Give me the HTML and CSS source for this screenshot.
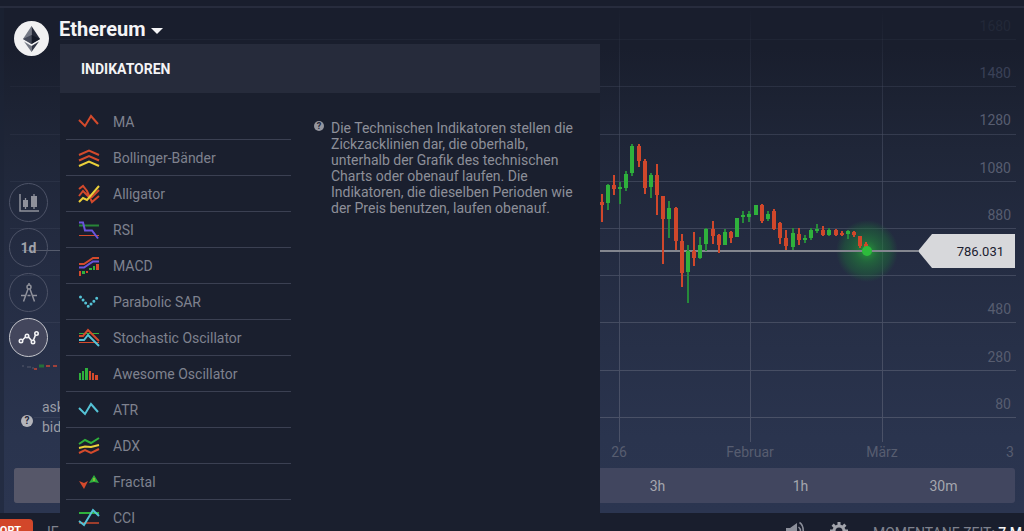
FILE: index.html
```html
<!DOCTYPE html>
<html lang="de">
<head>
<meta charset="utf-8">
<title>Ethereum – Indikatoren</title>
<link rel="stylesheet" href="styles.css">
</head>
<body>
<div class="topbar"></div>
<main class="stage">
  <svg class="chart" viewBox="0 8 1024 505" preserveAspectRatio="xMaxYMin slice" role="img" aria-label="Kursdiagramm Ethereum">
    <defs>
      <linearGradient id="fade" gradientUnits="userSpaceOnUse" x1="0" y1="8" x2="0" y2="442">
        <stop offset="0" stop-color="#454c60" stop-opacity="0"/>
        <stop offset=".35" stop-color="#454c60" stop-opacity=".7"/>
        <stop offset="1" stop-color="#4b5268"/>
      </linearGradient>
      <radialGradient id="glow">
        <stop offset="0" stop-color="#28a03a" stop-opacity=".95"/>
        <stop offset=".35" stop-color="#22813a" stop-opacity=".65"/>
        <stop offset=".75" stop-color="#1e6a3a" stop-opacity=".45"/>
        <stop offset="1" stop-color="#1e6a3a" stop-opacity="0"/>
      </radialGradient>
    </defs>
    <path class="rim" d="M0 8h4v505h-4z"/>
    <g fill="url(#fade)">
      <path d="M60 39h956v1H60zM60 86h956v1H60zM60 134h956v1H60zM60 181h956v1H60zM60 228h956v1H60zM60 275h956v1H60zM60 322h956v1H60zM60 370h956v1H60zM60 417h956v1H60z"/>
      <path opacity=".35" d="M10 86h50v1H10zM10 134h50v1H10zM10 181h50v1H10zM10 228h50v1H10zM10 275h50v1H10zM10 322h50v1H10zM34 417h26v1H34z"/>
      <path d="M619 8h1v434h-1zM750 8h1v434h-1zM882 8h1v434h-1z"/>
    </g>
    <g class="axis price-axis">
      <text class="faintest" x="1011" y="31">1680</text>
      <text class="faint" x="1011" y="78">1480</text>
      <text x="1011" y="125">1280</text>
      <text x="1011" y="173">1080</text>
      <text x="1011" y="220">880</text>
      <text x="1011" y="314">480</text>
      <text x="1011" y="362">280</text>
      <text x="1011" y="409">80</text>
    </g>
    <g class="axis time-axis">
      <text x="619" y="457">26</text>
      <text x="750" y="457">Februar</text>
      <text x="882" y="457">März</text>
      <text x="1010" y="457">3</text>
    </g>
    <circle cx="867" cy="251" r="31" fill="url(#glow)"/>
    <path class="price-line" d="M600 250h318v2H600z"/>
    <path class="price-line soft" d="M22 250h38v1H22z"/>
    <g class="up">
      <path class="wick" d="M608 184V210M620 182V204M626 171V191M632 144V176M651 173V198M669 201V238M688 245V303M700 237V259M706 228V251M725 229V245M743 211V223M749 211V222M768 211V221M793 228V250M805 235V243M811 228V240M817 224V233M829 228V236M848 230V239"/>
      <path class="bar" d="M608 185V203M620 187V189M626 174V188M632 146V173M651 175V187M669 208V219M688 251V272M700 245V258M706 229V244M725 232V245M737 218V237M743 215V217M749 214V217M756 205V215M768 214V219M793 233V247M805 238V240M811 230V238M817 229V231M829 230V235M848 231V234"/>
    </g>
    <g class="down">
      <path class="wick" d="M602 194V222M614 175V195M639 144V167M645 159V194M657 164V215M663 196V264M676 207V250M682 234V287M694 232V266M713 221V244M719 234V253M731 231V243M762 204V223M774 209V230M780 222V244M786 230V250M799 228V245M823 226V236M836 229V236M842 231V236M854 231V237M860 236V248M866 242V249"/>
      <path class="bar" d="M602 202V205M614 185V189M639 146V161M645 161V188M657 175V195M663 196V219M676 208V241M682 241V273M694 251V258M713 229V236M719 235V245M731 232V238M762 205V221M774 211V229M780 223V238M786 238V246M799 234V240M823 230V235M836 230V235M842 233V235M854 232V235M860 236V246M866 244V247"/>
    </g>
    <circle class="now" cx="867" cy="251" r="5"/>
    <path class="tag" d="M918 251l14-17h83v34h-83z"/>
    <text class="tag-text" x="1004" y="256">786.031</text>
    <path class="mini-grey" d="M22 366h2m3 1h4m1 1h2"/>
    <path class="mini-down" d="M34 369h3m9-3h4m3 0h4"/>
    <path class="mini-up" d="M39 366h5"/>
  </svg>

  <div class="upper">
    <aside class="rail">
      <svg class="coin" viewBox="0 0 35 35" aria-hidden="true">
        <circle cx="17.500" cy="17.500" r="17.500" fill="#f1f1f2"/>
        <path d="M17.500 5L9 18l8.500 5z" fill="#747985"/>
        <path d="M17.500 5L26 18l-8.500 5z" fill="#242938"/>
        <path d="M9 18l8.500-4v9z" fill="#454a59"/>
        <path d="M26 18l-8.500-4v9z" fill="#151a28"/>
        <path d="M10 20.500l7.500 4.500v6z" fill="#747985"/>
        <path d="M25 20.500L17.500 25v6z" fill="#303544"/>
      </svg>
      <nav class="tools" aria-label="Werkzeuge">
        <button class="tool" type="button" aria-label="Diagrammtyp">
          <svg class="glyph" viewBox="0 0 22 22"><path d="M2 2v17h19" fill="none" stroke="#8f919b" stroke-width="1.500"/><path d="M5 8h5v7H5zM13 4h6v11h-6z" fill="#8f919b"/><path d="M7.500 6v11M16 2v15" stroke="#8f919b" stroke-width="1.300"/></svg>
        </button>
        <button class="tool" type="button">1d</button>
        <button class="tool" type="button" aria-label="Zeichenwerkzeuge">
          <svg class="glyph" viewBox="0 0 22 22"><g fill="none" stroke="#8f919b" stroke-width="1.500"><circle cx="11" cy="5" r="2"/><path d="M11 1v2M10 7L5.500 19.500M12 7l4.500 12.500M3 13.500h4.500m2 0h3m2 0H19"/></g></svg>
        </button>
        <button class="tool active" type="button" aria-label="Indikatoren" aria-pressed="true">
          <svg class="glyph" viewBox="0 0 22 22"><g fill="none" stroke="#f3f3f5" stroke-width="1.600"><path d="M4.500 13l3-3M10 9.500l3.500 4M15.500 13l2-5"/><circle cx="3" cy="14" r="1.700"/><circle cx="9" cy="9" r="1.700"/><circle cx="15" cy="15" r="1.700"/><circle cx="18.500" cy="6.500" r="1.700"/></g></svg>
        </button>
      </nav>
      <div class="quote">
        <span class="help">?</span>
        <div class="quote-lines"><span>ask:</span><span>bid:</span></div>
      </div>
    </aside>
    <button class="asset" type="button">Ethereum<span class="caret"></span></button>
  </div>

  <div class="frames">
    <button class="frame current" type="button" aria-label="Zeitraum"></button>
    <button class="frame shift3" type="button">3h</button>
    <button class="frame" type="button">1h</button>
    <button class="frame" type="button">30m</button>
  </div>

  <section class="panel">
    <h2 class="panel-title">INDIKATOREN</h2>
    <div class="panel-body">
      <ul class="list">
        <li><button class="item" type="button"><svg class="mark" viewBox="0 0 20 18"><path class="r" d="M0 7l6 6 6-10 7 8"/></svg>MA</button></li>
        <li><button class="item" type="button"><svg class="mark" viewBox="0 0 20 18"><path class="r" d="M0 6l10-4.500L20 6M0 11.500L10 7l10 4.500"/><path class="y" d="M0 17l10-4.500L20 17"/></svg>Bollinger-Bänder</button></li>
        <li><button class="item" type="button"><svg class="mark" viewBox="0 0 20 18"><path class="r" d="M0 4l4-3 4 5 5 11 7-6M0 11l4-5 5 5 4 1 7-7"/><path class="y" d="M0 17l4-4 4 2L20 1"/></svg>Alligator</button></li>
        <li><button class="item" type="button"><svg class="mark" viewBox="0 0 20 18"><path class="g dim" d="M0 4.500h20"/><path class="r thin" d="M0 14.500h20"/><path class="v" d="M0 1.500h4l2 8h7l6 8"/></svg>RSI</button></li>
        <li><button class="item" type="button"><svg class="mark" viewBox="0 0 20 18"><path class="r" d="M0 7h5l9-6h6"/><path class="v" d="M0 10.500h5l9-6h6"/><path d="M0 14h2v5H0zM7 14h2v2H7zM17 7h3v6h-3z" fill="#d44a2c"/><path d="M3 14h3v3H3zM10 11h3v2h-3zM14 9h2v4h-2z" fill="#2fb13c"/></svg>MACD</button></li>
        <li><button class="item" type="button"><svg class="mark" viewBox="0 0 20 18"><path class="c dots" d="M1.500 4l8 9.500L19 4"/></svg>Parabolic SAR</button></li>
        <li><button class="item" type="button"><svg class="mark" viewBox="0 0 20 18"><path class="g thin" d="M0 4.500h20"/><path class="r thin" d="M0 13.500h20"/><path class="r" d="M0 7h4l5-6 11 11"/><path class="c" d="M0 11h5l4-5 11 11"/></svg>Stochastic Oscillator</button></li>
        <li><button class="item" type="button"><svg class="mark" viewBox="0 0 20 18"><path d="M0 8h2v7H0zM3 6h2v9H3zM6 3h3v12H6z" fill="#2fb13c"/><path d="M10 6h2v9h-2zM13 8h2v7h-2zM16 10h3v5h-3z" fill="#d44a2c"/></svg>Awesome Oscillator</button></li>
        <li><button class="item" type="button"><svg class="mark" viewBox="0 0 20 18"><path class="c" d="M0 7l6 6 6-10 7 8"/></svg>ATR</button></li>
        <li><button class="item" type="button"><svg class="mark" viewBox="0 0 20 18"><path class="g" d="M0 7l6-4 6 3 8-5"/><path class="y" d="M0 11l6-1.500 6 .5 8-2"/><path class="r" d="M0 16l6-3 6 3 8-4"/></svg>ADX</button></li>
        <li><button class="item" type="button"><svg class="mark" viewBox="0 0 20 18"><path d="M0 8l5 2 4-2-4 8z" fill="#d44a2c"/><path d="M10 10l5-8 5 8-5-1z" fill="#2fb13c"/><path d="M15 5v3" stroke="#d8c83a"/></svg>Fractal</button></li>
        <li><button class="item" type="button"><svg class="mark" viewBox="0 0 20 18"><path class="g" d="M0 4h20"/><path class="r dim" d="M0 14h20"/><path class="c" d="M0 12l5 4L14 1l6 6"/></svg>CCI</button></li>
      </ul>
      <div class="note">
        <span class="help small">?</span>
        <p class="note-text">Die Technischen Indikatoren stellen die Zickzacklinien dar, die oberhalb, unterhalb der Grafik des technischen Charts oder obenauf laufen. Die Indikatoren, die dieselben Perioden wie der Preis benutzen, laufen obenauf.</p>
      </div>
    </div>
  </section>
</main>
<footer class="footer">
  <button class="support" type="button">SUPPORT</button>
  <span class="brand">IE</span>
  <div class="status">
    <svg class="status-icon" viewBox="0 0 20 20" aria-hidden="true"><path d="M1 7h4l7-5v16l-7-5H1z" fill="#8c8f9a"/><path d="M13.500 6a5 5 0 0 1 0 8M14.500 1.500c5 3 5 14 0 17" fill="none" stroke="#8c8f9a" stroke-width="1.500"/></svg>
    <svg class="status-icon" viewBox="0 0 20 20" aria-hidden="true"><circle cx="10" cy="10" r="5" fill="none" stroke="#a2a4ac" stroke-width="3"/><path d="M10 1v4M10 15v4M1 10h4M15 10h4M3.600 3.600l3 3M13.400 13.400l3 3M3.600 16.400l3-3M13.400 6.600l3-3" stroke="#a2a4ac" stroke-width="3"/></svg>
    <span class="clock">MOMENTANE ZEIT: <b>7 M</b></span>
  </div>
</footer>
</body>
</html>
```
FILE: styles.css
```css
* { box-sizing: border-box; }

body {
  margin: 0;
  height: 100vh;
  overflow: hidden;
  background: #191e2d;
  color: #7f828e;
  font: 14px/16px Roboto, "Liberation Sans", sans-serif;
}

button {
  margin: 0;
  padding: 0;
  border: 0;
  background: none;
  color: inherit;
  font: inherit;
  cursor: pointer;
}

.topbar { height: 8px; border-bottom: 2px solid #272c3d; }

.stage {
  position: relative;
  display: flex;
  flex-direction: column;
  height: calc(100vh - 26px);
  background: linear-gradient(#191e2d 8%, #1f2638 28%, #242c42 50%, #2a344e 85%, #2b3550);
}

.chart { position: absolute; inset: 0; width: 100%; height: 100%; }
.rim { fill: #1c2336; opacity: .5; }
.axis { fill: #575d70; font-size: 14px; }
.price-axis { text-anchor: end; }
.time-axis { text-anchor: middle; }
.axis .faint { fill: #3a4157; }
.axis .faintest { fill: #222838; }
.price-line { fill: #83868f; }
.price-line.soft { fill: #555b6c; }
.wick { fill: none; stroke-width: 2; }
.bar { fill: none; stroke-width: 4; }
.up { stroke: #2fb13c; }
.up .wick { stroke: #268a3a; }
.down { stroke: #d0472b; }
.now { fill: #2dbb3c; }
.tag { fill: #d7d8db; }
.tag-text { fill: #1b2030; font-size: 13px; text-anchor: end; }
.mini-grey { stroke: #565b6c; }
.mini-down { stroke: #a0413a; stroke-width: 2; }
.mini-up { stroke: #25703a; stroke-width: 3; }

.upper { position: relative; display: flex; align-items: flex-start; flex: 1; }
.rail { width: 59px; padding-top: 13px; }
.coin { display: block; width: 35px; height: 35px; margin-left: 14px; }
.tools { display: flex; flex-direction: column; gap: 6px; margin: 127px 0 0 9px; }

.tool {
  display: grid;
  place-items: center;
  width: 39px;
  height: 39px;
  border: 1px solid #4d5367;
  border-radius: 50%;
  color: #a0a2aa;
  font-weight: 700;
}
.tool.active { border-color: #c5c6cc; background: #43465c; }
.glyph { width: 22px; height: 22px; }

.quote { display: flex; align-items: center; gap: 9px; margin: 40px 0 0 21px; color: #9a9ca5; line-height: 20px; }
.quote-lines { display: flex; flex-direction: column; }
.help {
  flex: none;
  width: 12px;
  height: 12px;
  border-radius: 50%;
  background: #b4b5bb;
  color: #1f2537;
  font-size: 10px;
  font-weight: 700;
  line-height: 12px;
  text-align: center;
}
.quote .help { margin-top: 8px; }
.help.small { width: 10px; height: 10px; margin-top: 1px; background: #94969f; font-size: 9px; line-height: 10px; }

.asset {
  display: flex;
  align-items: center;
  gap: 6px;
  padding-top: 9px;
  color: #f4f4f6;
  font-size: 20px;
  font-weight: 700;
  line-height: 24px;
}
.caret { margin-top: 4px; border: 6px solid transparent; border-top-color: #f4f4f6; border-bottom: 0; }

.frames {
  position: relative;
  display: grid;
  grid-template-columns: repeat(7, 1fr);
  height: 35px;
  margin: 0 9px 10px 14px;
  border-radius: 3px;
  background: #41465f;
  overflow: hidden;
}
.frame { color: #a5a6ae; }
.frame.current { background: #565769; }
.frame.shift3 { grid-column: 5; }

.panel {
  position: absolute;
  top: 36px;
  left: 60px;
  z-index: 1;
  width: 540px;
  background: #1a1f2e;
}
.panel-title {
  margin: 0;
  padding: 17px 21px 16px;
  background: #262b3b;
  color: #f4f4f6;
  font-size: 14px;
  font-weight: 700;
  line-height: 16px;
}
.panel-body { display: flex; align-items: flex-start; padding: 11px 0 0 6px; }
.list { width: 225px; margin: 0; padding: 0; list-style: none; }
.item {
  display: flex;
  align-items: center;
  gap: 14px;
  width: 100%;
  height: 36px;
  padding-left: 13px;
  border-bottom: 1px solid #3b4052;
}

.mark { width: 20px; height: 18px; overflow: visible; }
.r, .y, .g, .v, .c { fill: none; stroke-width: 2; }
.r { stroke: #d44a2c; }
.y { stroke: #ecd03a; }
.g { stroke: #2fb13c; }
.v { stroke: #6a55dc; }
.c { stroke: #55c3d6; }
.thin { stroke-width: 1; }
.dim { opacity: .7; }
.dots { stroke-width: 3; stroke-linecap: round; stroke-dasharray: 0 4; }

.note { display: flex; gap: 7px; margin: 16px 0 0 23px; color: #8d8f99; }
.note-text { width: 246px; margin: 0; }

.footer { display: flex; align-items: flex-start; padding-top: 6px; height: 40px; }
.support {
  width: 33px;
  height: 28px;
  padding: 0 12px 4px 0;
  border-radius: 0 4px 0 0;
  background: #d2472a;
  color: #fff;
  font-size: 11px;
  font-weight: 700;
  display: flex;
  justify-content: flex-end;
  align-items: center;
}
.brand { margin: 5px 0 0 14px; }
.status { display: flex; margin-left: auto; padding-right: 2px; gap: 24px; align-items: center; white-space: nowrap; }
.status-icon { width: 20px; height: 20px; margin-top: 2px; }
.clock { margin: 6px 0 0; }
.clock b { color: #f4f4f6; font-weight: 500; }
```
